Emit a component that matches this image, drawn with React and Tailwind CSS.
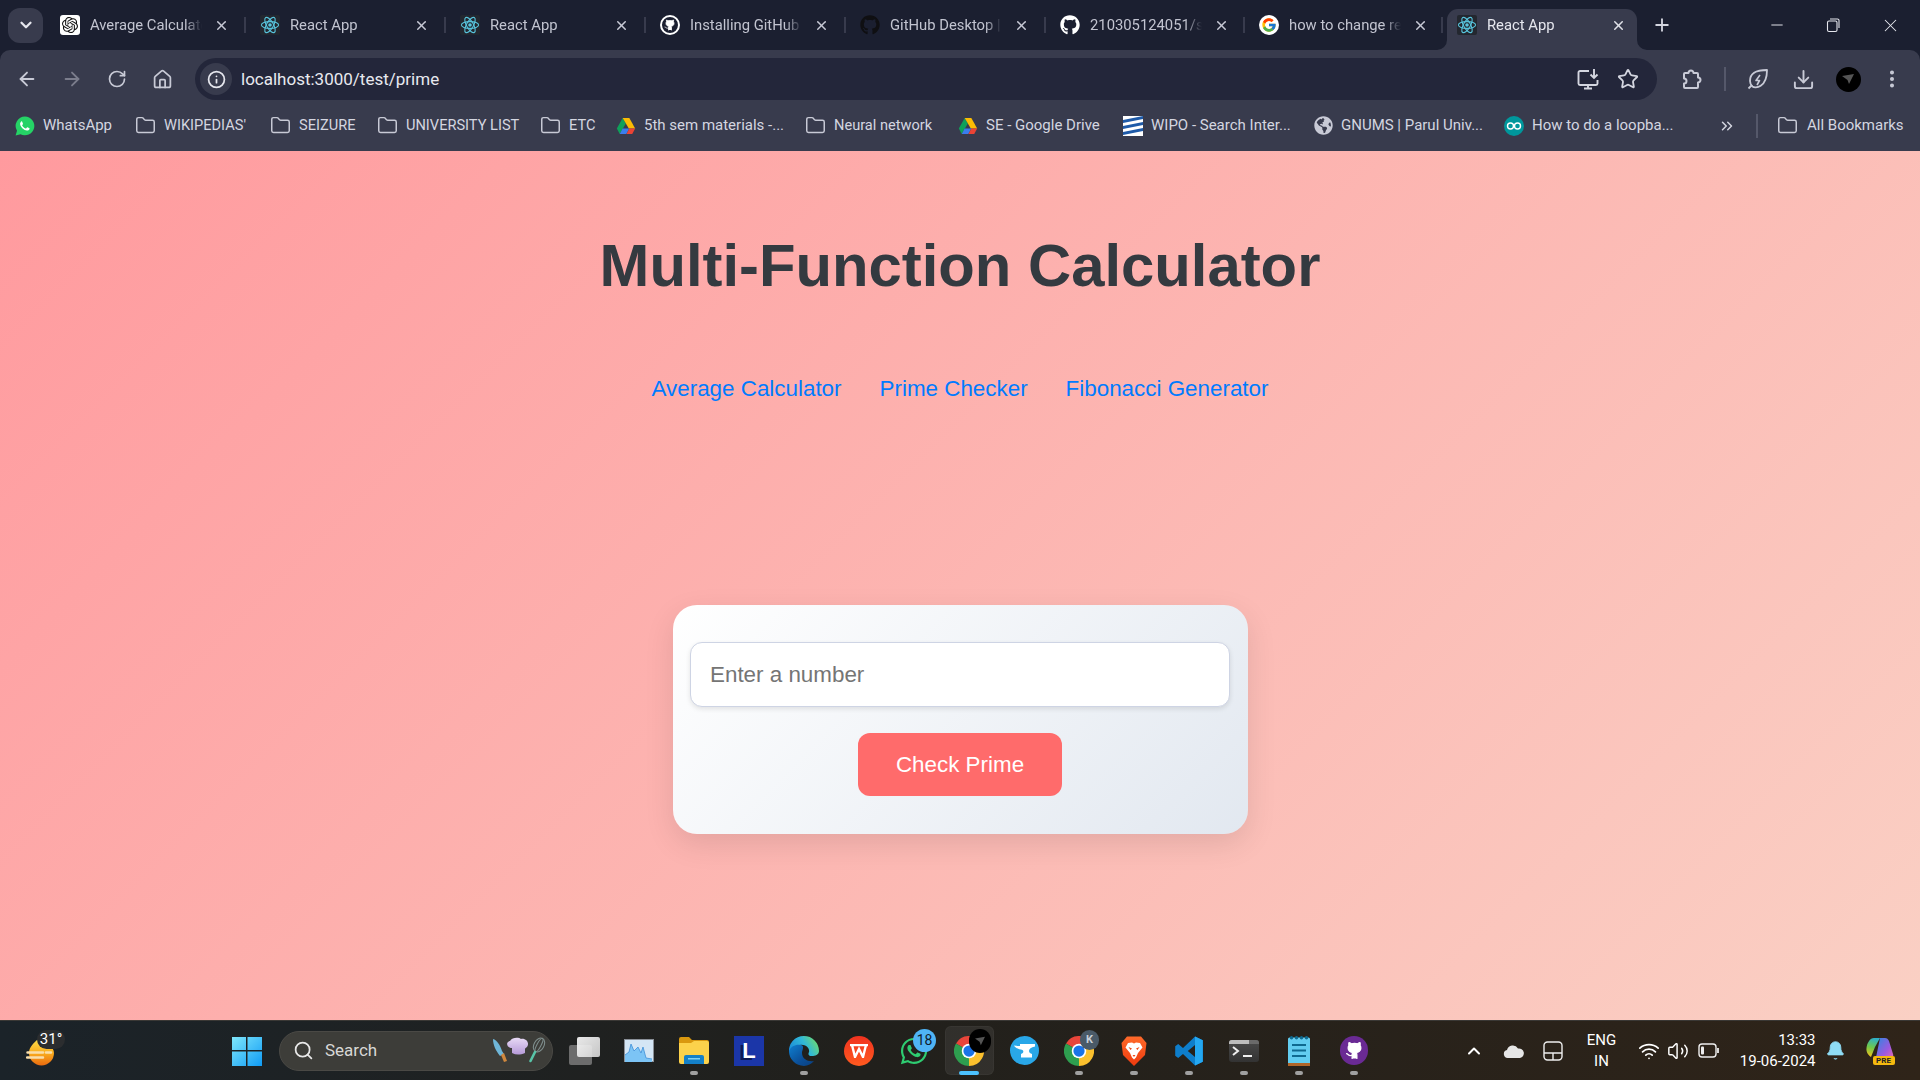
import React from "react";
import { ArrowLeft, ArrowRight, RotateCw, House, Info, Star, Download, EllipsisVertical, ChevronsRight, Folder, Minus, X, Plus, ChevronDown, Search, Wifi, Volume2, ChevronUp, Bell } from "lucide-react";
import { FaGithub, FaGlobeAmericas, FaWhatsapp } from "react-icons/fa";
import { FcGoogle } from "react-icons/fc";
import { SiOpenai } from "react-icons/si";

const ui = { fontFamily: "Roboto, 'Noto Sans', sans-serif" };

function GhCat({ size = 20 }) {
  return (
    <svg width={size} height={size} viewBox="0 0 24 24" fill="#fff" stroke="#fff" strokeWidth="1.6" strokeLinecap="round" strokeLinejoin="round">
      <path d="M15 22v-4a4.8 4.8 0 0 0-1-3.5c3 0 6-2 6-5.5.08-1.25-.27-2.48-1-3.5.28-1.15.28-2.35 0-3.5 0 0-1 0-3 1.5-2.64-.5-5.36-.5-8 0C6 2 5 2 5 2c-.3 1.15-.3 2.35 0 3.5A5.403 5.403 0 0 0 4 9c0 3.5 3 5.5 6 5.5-.39.49-.68 1.05-.85 1.65-.17.6-.22 1.23-.15 1.85v4" />
      <path d="M9 18c-4.51 2-5-2-7-2" fill="none" />
    </svg>
  );
}

function ReactLogo() {
  return (
    <svg width="20" height="20" viewBox="0 0 20 20" className="shrink-0">
      <rect width="20" height="20" rx="2" fill="#23272f" />
      <g fill="none" stroke="#58c4dc" strokeWidth="1.1">
        <ellipse cx="10" cy="10" rx="8.6" ry="3.4" />
        <ellipse cx="10" cy="10" rx="8.6" ry="3.4" transform="rotate(60 10 10)" />
        <ellipse cx="10" cy="10" rx="8.6" ry="3.4" transform="rotate(120 10 10)" />
      </g>
      <circle cx="10" cy="10" r="1.8" fill="#58c4dc" />
    </svg>
  );
}

function ChromeLogo({ size = 30 }) {
  return (
    <svg width={size} height={size} viewBox="0 0 24 24">
      <path d="M12 12L1.6 6A12 12 0 0 1 22.400 6Z" fill="#e8453a" />
      <path d="M12 12L22.400 6A12 12 0 0 1 12 24Z" fill="#fbc02d" />
      <path d="M12 12L12 24A12 12 0 0 1 1.600 6Z" fill="#2e9e4f" />
      <circle cx="12" cy="12" r="5.800" fill="#fff" />
      <circle cx="12" cy="12" r="4.500" fill="#1a73e8" />
    </svg>
  );
}

function DriveLogo() {
  return (
    <svg width="20" height="20" viewBox="0 0 24 24">
      <path d="M8 2.5L1 15l3.5 6.5L11.8 9Z" fill="#0fa05a" />
      <path d="M8 2.5h8L23 15h-7.6Z" fill="#fbbc04" />
      <path d="M8 15h8l-3.6 6.5H4.5Z" fill="#3b7ded" />
      <path d="M16 15h7l-3.5 6.5h-7Z" fill="#ea4335" />
    </svg>
  );
}

function WipoLogo() {
  return (
    <svg width="20" height="20" viewBox="0 0 20 20">
      <rect width="20" height="20" fill="#fff" />
      <path d="M0 4L20 0v3L0 7ZM0 10L20 6v3L0 13ZM0 16L20 12v3L0 19Z" fill="#1e5aa8" />
    </svg>
  );
}

function ArduinoLogo() {
  return (
    <svg width="20" height="20" viewBox="0 0 20 20">
      <circle cx="10" cy="10" r="10" fill="#00979c" />
      <circle cx="6.5" cy="10" r="3" fill="none" stroke="#fff" strokeWidth="1.4" />
      <circle cx="13.5" cy="10" r="3" fill="none" stroke="#fff" strokeWidth="1.4" />
    </svg>
  );
}

function WhatsBook() {
  return (
    <div className="relative w-5 h-5 flex items-center justify-center">
      <div className="absolute w-[15px] h-[15px] rounded-full bg-white" />
      <svg width="20" height="20" viewBox="0 0 20 20" className="relative">
        <path d="M10 .5a9.4 9.4 0 0 0-8 14.2L.6 19.5l4.9-1.3A9.4 9.4 0 1 0 10 .5Z" fill="#25d366" />
        <path d="M7 5.2c-.3 0-.7.1-1 .5-.4.4-1.1 1.2-.9 2.6.3 1.7 1.3 3 2.5 4.2 1.4 1.2 2.8 1.9 4.2 2.1 1.2.1 2.1-.5 2.5-1.2.2-.5.3-1 .2-1.2l-2-1c-.2-.1-.4 0-.6.2l-.8 1c-.1.2-.3.2-.5.1-1.5-.6-2.6-1.6-3.4-3-.1-.2 0-.4.1-.5l.6-.8c.1-.2.1-.4.1-.5l-.9-2.1c-.1-.2-.2-.4-.5-.4Z" fill="#fff" />
      </svg>
    </div>
  );
}

const tabs = [
  { w: 200, t: "Average Calculator - ChatGPT", i: <div className="w-5 h-5 rounded-[3px] bg-white flex items-center justify-center"><SiOpenai size={16} color="#111" /></div> },
  { w: 200, t: "React App", i: <ReactLogo /> },
  { w: 200, t: "React App", i: <ReactLogo /> },
  { w: 200, t: "Installing GitHub Desktop", i: <div className="w-5 h-5 rounded-full border-2 border-white flex items-center justify-center bg-[#1b1f30]"><GhCat size={12} /></div> },
  { w: 200, t: "GitHub Desktop | Simple", i: <FaGithub size={20} color="#0f0f12" /> },
  { w: 199, t: "210305124051/student-app", i: <FaGithub size={20} color="#fff" /> },
  { w: 198, t: "how to change remote", i: <div className="w-5 h-5 rounded-full bg-white flex items-center justify-center"><FcGoogle size={16} /></div> },
  { w: 199, t: "React App", i: <ReactLogo />, active: true },
];

function Tab({ t, i, active, w }) {
  return (
    <div style={{ width: w }} className="relative h-full flex items-center pl-[14px] shrink-0">
      {active && (
        <>
          <div className="absolute left-[4px] right-[5px] top-[9px] bottom-0 bg-[#383b4d] rounded-t-[11px]" />
          <svg width="10" height="10" viewBox="0 0 10 10" className="absolute left-[-6px] bottom-0"><path d="M10 0V10H0A10 10 0 0 0 10 0Z" fill="#383b4d" /></svg>
          <svg width="10" height="10" viewBox="0 0 10 10" className="absolute right-[-5px] bottom-0"><path d="M0 0V10H10A10 10 0 0 1 0 0Z" fill="#383b4d" /></svg>
        </>
      )}
      <div className="relative w-5 h-5 shrink-0 flex items-center justify-center">{i}</div>
      <div className={`relative ml-[10px] w-[112px] overflow-hidden whitespace-nowrap text-[14.8px] leading-5 [mask-image:linear-gradient(to_right,black_85%,transparent)] ${active ? "text-[#e6e7ee]" : "text-[#c2c4d0]"}`}>{t}</div>
      <X size={15} strokeWidth={2.4} className={`relative ml-[12px] shrink-0 ${active ? "text-[#e0e1e8]" : "text-[#c8cad6]"}`} />
      {!active && <div className="absolute right-[0px] top-[17px] h-[16px] w-[2px] bg-[#383b4d]" />}
    </div>
  );
}

function TabStrip() {
  return (
    <div className="h-[50px] bg-[#1b1f30] flex items-center shrink-0">
      <div className="w-[46px] h-full flex items-center pl-[8px] shrink-0">
        <div className="w-[35px] h-[35px] rounded-[12px] bg-[#383b4d] flex items-center justify-center">
          <ChevronDown size={18} strokeWidth={3} className="text-[#e6e7ee]" />
        </div>
      </div>
      {tabs.map((x, k) => <Tab key={k} {...x} />)}
      <Plus size={20} strokeWidth={2.2} className="text-[#d4d6e0] ml-[10px] shrink-0" />
      <div className="ml-auto flex items-center h-full">
        <div className="w-[56px] flex justify-center"><Minus size={18} strokeWidth={1.3} className="text-[#e6e7ee]" /></div>
        <div className="w-[56px] flex justify-center">
          <svg width="16" height="16" viewBox="0 0 16 16" fill="none" stroke="#e6e7ee" strokeWidth="1.1"><rect x="2.5" y="4" width="9.5" height="10.5" rx="1.5" /><path d="M5 2h7.5A1.5 1.5 0 0 1 14 3.5V11" /></svg>
        </div>
        <div className="w-[58px] flex justify-center mr-[1px]"><X size={21} strokeWidth={1.2} className="text-[#e6e7ee]" /></div>
      </div>
    </div>
  );
}

function Cell({ w = 45, children, className = "" }) {
  return <div style={{ width: w }} className={`flex items-center justify-center shrink-0 ${className}`}>{children}</div>;
}

function InstallIcon() {
  return (
    <svg width="24" height="24" viewBox="0 0 24 24" fill="none" stroke="#d4d6e0" strokeWidth="1.9">
      <path d="M13 4H4a1.5 1.5 0 0 0-1.5 1.5v11A1.5 1.5 0 0 0 4 18h16a1.5 1.5 0 0 0 1.5-1.5V13" />
      <path d="M8 21.5h8M12 18v3.5" />
      <path d="M18 2v8.5M14.5 7.5l3.5 3.5 3.5-3.5" />
    </svg>
  );
}

function LeafIcon() {
  return (
    <svg width="24" height="24" viewBox="0 0 24 24" fill="none" stroke="#c8cad6" strokeWidth="1.8" strokeLinejoin="round">
      <path d="M21 3C14 3 4 4 4 14c0 2 .8 4 2.5 5.5C9 21.5 21 21 21 3Z" />
      <path d="M2.5 21.5L6 18" />
      <path d="M14 8l-4 5.5h3.5L11 18" strokeWidth="1.6" />
    </svg>
  );
}

function PuzzleIcon() {
  return (
    <svg width="24" height="24" viewBox="0 0 24 24" fill="none" stroke="#c8cad6" strokeWidth="2" strokeLinejoin="round">
      <path d="M7 6h3.500a2.500 2.500 0 0 1 5 0H19a1 1 0 0 1 1 1v3.500a2.500 2.500 0 0 1 0 5V20a1 1 0 0 1-1 1H7a1 1 0 0 1-1-1v-3.500a2.500 2.500 0 0 0 0-5V7a1 1 0 0 1 1-1Z" />
    </svg>
  );
}

function Toolbar() {
  const c = "text-[#c8cad6]";
  return (
    <div className="h-[50px] bg-[#383b4d] rounded-t-[10px] flex items-center pl-[4.5px] pt-[8px] shrink-0">
      <Cell><ArrowLeft size={22} strokeWidth={2} className={c} /></Cell>
      <Cell><ArrowRight size={22} strokeWidth={2} className="text-[#7b7d8c]" /></Cell>
      <Cell><RotateCw size={20} strokeWidth={2} className={c} /></Cell>
      <Cell><House size={21} strokeWidth={2} className={c} /></Cell>
      <div className="ml-[10.5px] w-[1462px] h-[42px] rounded-full bg-[#23263a] flex items-center pl-[5px] pr-[8px] shrink-0">
        <div className="w-[32px] h-[32px] rounded-full bg-[#383b4d] flex items-center justify-center shrink-0">
          <Info size={19} strokeWidth={2.2} className="text-[#e6e7ee]" />
        </div>
        <span className="ml-[9px] pt-[2px] text-[17px] text-[#e8e9ef] whitespace-nowrap">localhost:3000/test/prime</span>
        <div className="ml-auto flex items-center">
          <Cell w={38}><InstallIcon /></Cell>
          <Cell w={42}><Star size={22} strokeWidth={2} className="text-[#d4d6e0]" /></Cell>
        </div>
      </div>
      <Cell w={44} className="ml-[11px]"><PuzzleIcon /></Cell>
      <div className="ml-[12px] w-[2px] h-[24px] bg-[#55586a]" />
      <Cell w={44} className="ml-[10px]"><LeafIcon /></Cell>
      <Cell w={46}><Download size={23} strokeWidth={2} className={c} /></Cell>
      <Cell w={44}>
        <div className="w-[25px] h-[25px] rounded-full bg-black flex items-center justify-center">
          <svg width="12" height="12" viewBox="0 0 12 12"><path d="M0 3l12-2-5 10-1.5-4Z" fill="#555" /></svg>
        </div>
      </Cell>
      <Cell w={44}><EllipsisVertical size={22} strokeWidth={2.4} className={c} /></Cell>
    </div>
  );
}

const folderIcon = <Folder size={21} strokeWidth={1.7} className="text-[#c8cad6]" />;
const bookmarks = [
  { w: 120, i: <WhatsBook />, t: "WhatsApp" },
  { w: 135, i: folderIcon, t: "WIKIPEDIAS'", f: true },
  { w: 107, i: folderIcon, t: "SEIZURE", f: true },
  { w: 163, i: folderIcon, t: "UNIVERSITY LIST", f: true },
  { w: 76, i: folderIcon, t: "ETC", f: true },
  { w: 189, i: <DriveLogo />, t: "5th sem materials -..." },
  { w: 153, i: folderIcon, t: "Neural network", f: true },
  { w: 165, i: <DriveLogo />, t: "SE - Google Drive" },
  { w: 190, i: <WipoLogo />, t: "WIPO - Search Inter..." },
  { w: 191, i: <FaGlobeAmericas size={19} color="#c8cad6" />, t: "GNUMS | Parul Univ..." },
  { w: 200, i: <ArduinoLogo />, t: "How to do a loopba..." },
];

function BookmarkBar() {
  return (
    <div className="h-[51px] bg-[#383b4d] flex items-center pl-[14px] shrink-0 text-[15px] text-[#d4d6e0]">
      {bookmarks.map((b, k) => (
        <div key={k} style={{ width: b.w }} className="flex items-center shrink-0">
          <div className="w-[22px] flex justify-center shrink-0">{b.i}</div>
          <span className={`${b.f ? "ml-[8px] text-[14.6px]" : "ml-[7px]"} whitespace-nowrap`}>{b.t}</span>
        </div>
      ))}
      <ChevronsRight size={18} strokeWidth={2} className="text-[#d4d6e0] ml-[15px] shrink-0" />
      <div className="ml-[20px] w-[2px] h-[24px] bg-[#55586a] shrink-0" />
      <div className="ml-[19px] flex items-center shrink-0">
        {folderIcon}
        <span className="ml-[9px] whitespace-nowrap">All Bookmarks</span>
      </div>
    </div>
  );
}

function Page() {
  return (
    <main className="flex-1 flex flex-col items-center bg-[linear-gradient(135deg,#ff9a9e,#fad0c4)]" style={{ fontFamily: "'Liberation Sans', Arial, sans-serif" }}>
      <h1 className="mt-[79px] text-[59.8px] leading-[72px] font-bold text-[#343a40]">Multi-Function Calculator</h1>
      <nav className="mt-[73px] flex gap-[38px] text-[22.4px] leading-[28px] text-[#007bff]">
        <a>Average Calculator</a>
        <a>Prime Checker</a>
        <a>Fibonacci Generator</a>
      </nav>
      <div className="mt-[202px] w-[575px] h-[229px] rounded-[24px] bg-[linear-gradient(135deg,#ffffff,#e2e8f0)] shadow-[0_10px_30px_rgba(0,0,0,0.1)] flex flex-col items-center pt-[37px]">
        <input readOnly placeholder="Enter a number" className="w-[540px] h-[65px] rounded-[12px] border border-[#ced4e4] bg-white px-[19px] text-[22.4px] text-[#333] placeholder:text-[#757575] shadow-[0_2px_5px_rgba(0,0,0,0.1)] outline-none" />
        <button className="mt-[26px] w-[204px] h-[63px] rounded-[12px] bg-[#ff6b6b] text-white text-[22.4px]">Check Prime</button>
      </div>
    </main>
  );
}

function Weather() {
  return (
    <div className="relative w-[60px] h-[50px]">
      <svg width="29" height="27" viewBox="0 0 29 27" className="absolute left-[6px] top-[13px]">
        <defs>
          <linearGradient id="sun" x1="0" y1="0" x2="0" y2="1"><stop offset="0" stopColor="#fde04a" /><stop offset="0.55" stopColor="#f9a91c" /><stop offset="1" stopColor="#ea6a10" /></linearGradient>
        </defs>
        <path d="M12 0C8 4 3 8 3 14a12.500 12.500 0 0 0 25 0C28 8 20 2 12 0Z" fill="url(#sun)" />
        <path d="M1.500 13.500H17M20 13.500h5M1 18.500H17" stroke="#f9deaa" strokeWidth="2.500" strokeLinecap="round" />
      </svg>
      <div className="absolute left-[17px] top-[4px] w-[28px] h-[19px] rounded-full bg-[#2b2d2f] text-white text-[15px] leading-[19px] text-center">31°</div>
    </div>
  );
}

function ChefIcons() {
  return (
    <svg width="54" height="27" viewBox="0 0 54 27" className="shrink-0">
      <defs>
        <linearGradient id="hat" x1="0" y1="0" x2="0" y2="1"><stop offset="0" stopColor="#e8daf5" /><stop offset="1" stopColor="#b69ad8" /></linearGradient>
      </defs>
      <path d="M1 2C5 3 8 8 10 14L12 17 8 19C4 14 1 8 1 2Z" fill="#6fb6d8" />
      <path d="M9 18L12 16 15 24 12 25Z" fill="#d0883e" />
      <path d="M20 11C15 11 13 5 18 4 20 0 27 0 29 2 34 1 38 6 35 10 34 11 33 11 33 12V16C28 18 24 18 20 16Z" fill="url(#hat)" />
      <g fill="none" stroke="#7e8d8c" strokeWidth="1.100">
        <ellipse cx="47" cy="8" rx="5" ry="7.500" transform="rotate(28 47 8)" />
        <ellipse cx="47" cy="8" rx="2" ry="7.500" transform="rotate(28 47 8)" />
      </g>
      <path d="M43 15L38.500 24" stroke="#58c4a8" strokeWidth="2.600" strokeLinecap="round" />
    </svg>
  );
}

function IC({ children, dot, active }) {
  return (
    <div className="relative w-[55px] h-[60px] flex items-center justify-center shrink-0">
      {active && <div className="absolute left-[3px] top-[5px] w-[49px] h-[49px] rounded-[6px] bg-[#ffffff12] border border-[#ffffff08]" />}
      <div className="relative flex">{children}</div>
      {dot && <div className="absolute left-[23.500px] top-[50px] w-[8px] h-[4px] rounded-full bg-[#a0a0a0]" />}
      {active && <div className="absolute left-[17.500px] top-[50px] w-[20px] h-[4px] rounded-full bg-[#4cc2ff]" />}
    </div>
  );
}

function Taskbar() {
  return (
    <div className="h-[60px] shrink-0 bg-[linear-gradient(90deg,#1b2329,#21201c_45%,#2f2419)] border-t border-[#3a3835] flex items-center text-white" style={{ fontFamily: "Roboto, 'Noto Sans', sans-serif" }}>
      <div className="w-[219.5px] shrink-0 pl-[20px]"><Weather /></div>
      <IC>
        <svg width="30" height="30" viewBox="0 0 30 30">
          <defs>
            <linearGradient id="win" x1="0" y1="0" x2="1" y2="1"><stop offset="0" stopColor="#7fe7fb" /><stop offset="1" stopColor="#0f9bf5" /></linearGradient>
          </defs>
          <path d="M0 1h14v13H0ZM15.500 1H30v13H15.500ZM0 15.500h14V30H0ZM15.500 15.500H30V30H15.500Z" fill="url(#win)" />
        </svg>
      </IC>
      <div className="ml-[4.5px] w-[274px] h-[40px] rounded-full bg-[#3d3d39] border border-[#4a4945] flex items-center pl-[13px] shrink-0">
        <Search size={21} strokeWidth={2} className="text-[#e8e8e8]" />
        <span className="ml-[11px] text-[17px] text-[#d8d8d6]">Search</span>
        <div className="ml-auto mr-[6px] flex"><ChefIcons /></div>
      </div>
      <div className="ml-[3.5px]" />
      <IC>
        <div className="relative w-[31px] h-[28px]">
          <div className="absolute left-0 bottom-0 w-[23px] h-[20px] rounded-[2px] bg-[#6c6c6c]" />
          <div className="absolute right-0 top-0 w-[23px] h-[20px] rounded-[2px] bg-[linear-gradient(135deg,#ffffff,#d8d8d8)] opacity-90" />
        </div>
      </IC>
      <IC>
        <svg width="30" height="23" viewBox="0 0 30 23">
          <rect x=".5" y=".5" width="29" height="22" fill="#d4e6f5" stroke="#8a9098" />
          <path d="M1 16L5 13 7 5l3 7 4-4 3 6 2-6 3 11 6 1v5H1Z" fill="#7cc4f5" />
          <path d="M1 16L5 13 7 5l3 7 4-4 3 6 2-6 3 11 6 1" fill="none" stroke="#3f8fd8" strokeWidth=".8" />
        </svg>
      </IC>
      <IC dot>
        <svg width="30" height="27" viewBox="0 0 30 27">
          <path d="M0 2a2 2 0 0 1 2-2h8l3 3h15a2 2 0 0 1 2 2v4H0Z" fill="#d9980f" />
          <path d="M0 6h12l3-2h13a2 2 0 0 1 2 2v19a2 2 0 0 1-2 2H2a2 2 0 0 1-2-2Z" fill="#fcd24b" />
          <path d="M5 20a2 2 0 0 1 2-2h16a2 2 0 0 1 2 2v7H5Z" fill="#1480c8" />
          <rect x="9" y="21" width="12" height="1.500" fill="#7fd0f5" />
        </svg>
      </IC>
      <IC>
        <div className="w-[30px] h-[30px] bg-[#1b36a8] flex items-center justify-center text-white text-[22px] font-bold [text-shadow:-3px_2px_0_#0c1a55]" style={{ fontFamily: "'Liberation Sans', sans-serif" }}>L</div>
      </IC>
      <IC dot>
        <svg width="30" height="30" viewBox="0 0 30 30">
          <defs>
            <linearGradient id="edge" x1="0" y1="0.700" x2="1" y2="0.300"><stop offset="0" stopColor="#1a8ad8" /><stop offset="0.550" stopColor="#31b8d8" /><stop offset="1" stopColor="#6fdc6c" /></linearGradient>
            <linearGradient id="edge2" x1="0" y1="0" x2="1" y2="1"><stop offset="0" stopColor="#0f7fd0" /><stop offset="0.600" stopColor="#0b4f98" /><stop offset="1" stopColor="#0a3f80" /></linearGradient>
          </defs>
          <path d="M15 0A15 15 0 0 1 30 15C30 19 26 20 23 20 19 20 19 18 20 16 21 12 16 8 11 9 6 10 2 14 0 17A15 15 0 0 1 15 0Z" fill="url(#edge)" />
          <path d="M0 15C2 10 7 8 12 9 16 10 13 14 13 17 13 23 19 26 25 25A15 15 0 0 1 15 30 15 15 0 0 1 0 15Z" fill="url(#edge2)" />
        </svg>
      </IC>
      <IC>
        <div className="w-[30px] h-[30px] rounded-full bg-[linear-gradient(180deg,#f0321f,#ff5a1f)] flex items-center justify-center">
          <svg width="20" height="14" viewBox="0 0 20 14" fill="none" stroke="#fff" strokeWidth="2.400"><path d="M1 1h18M3 1l3 12 4-8 4 8 3-12" /></svg>
        </div>
      </IC>
      <IC>
        <FaWhatsapp size={30} color="#2ecc71" />
        <div className="absolute right-[-7px] top-[-7px] w-[23px] h-[23px] rounded-full bg-[#4fb4f5] text-[#10202c] text-[14px] leading-[23px] text-center">18</div>
      </IC>
      <IC active>
        <ChromeLogo size={30} />
        <div className="absolute right-[-7px] top-[-7px] w-[22px] h-[24px] rounded-full bg-black flex items-center justify-center">
          <svg width="10" height="10" viewBox="0 0 12 12"><path d="M0 3l12-2-5 10-1.500-4Z" fill="#555" /></svg>
        </div>
      </IC>
      <IC>
        <div className="w-[29px] h-[29px] rounded-full bg-[#29a7e8] flex items-center justify-center">
          <svg width="21" height="14" viewBox="0 0 21 14" fill="#fff"><path d="M0 1.500C3 2 5 2 6 2V0h15v2.500C17 3 15 5 15 7c0 1.500 1.500 2.500 3 3v3.500H7V10C9.500 9 10 7 8.500 6 6 5 2 5 0 1.500Z" /></svg>
        </div>
      </IC>
      <IC dot>
        <ChromeLogo size={30} />
        <div className="absolute right-[-5px] top-[-6px] w-[19px] h-[20px] rounded-full bg-[#4a5a68] text-[#c8d0d8] text-[11px] font-bold leading-[20px] text-center">K</div>
      </IC>
      <IC dot>
        <svg width="26" height="30" viewBox="0 0 26 30">
          <defs>
            <linearGradient id="brave" x1="0" y1="0" x2="0" y2="1"><stop offset="0" stopColor="#ff6a2a" /><stop offset="1" stopColor="#ee3a0e" /></linearGradient>
          </defs>
          <path d="M6 0.500H20L25.500 7 24 19 13 30 2 19 .5 7Z" fill="url(#brave)" />
          <path d="M7 7L11 6.500 13 7.500 15 6.500 19 7 21.500 11.500 17 17 15 21.500 13 23.500 11 21.500 9 17 4.500 11.500Z" fill="#fff" />
          <path d="M7.500 11L11 12.500 9.500 14ZM18.500 11L15 12.500 16.500 14ZM11.500 19H14.500L13 21Z" fill="#ee4a18" />
        </svg>
      </IC>
      <IC dot>
        <svg width="30" height="30" viewBox="0 0 100 100">
          <path fillRule="evenodd" d="M70 2L96 14V86L70 98 30 60 14 73 4 66V34L14 27 30 40ZM70 30L46 50 70 70Z" fill="#0e7ecb" />
          <path d="M70 2L96 14V86L70 98V70 30Z" fill="#24a8f2" />
        </svg>
      </IC>
      <IC dot>
        <div className="w-[30px] h-[22px] rounded-[3px] bg-[linear-gradient(180deg,#4a4a4a,#333)] relative overflow-hidden">
          <div className="h-[4px] bg-[#6a6a6a]"><div className="w-[20px] h-[4px] bg-[#bdbdbd]" /></div>
          <svg width="30" height="18" viewBox="0 0 30 18" fill="none" stroke="#eee" strokeWidth="2"><path d="M4 3l5 4-5 4M14 12h9" /></svg>
        </div>
      </IC>
      <IC dot>
        <svg width="22" height="30" viewBox="0 0 22 30">
          <rect x="0" y="1.500" width="22" height="28.500" rx="1.500" fill="#62cdf0" />
          <rect x="0" y="27" width="22" height="3" fill="#b0662a" />
          <circle cx="3.500" cy="1.800" r="1.700" fill="#0f6a90" />
          <circle cx="8.500" cy="1.800" r="1.700" fill="#0f6a90" />
          <circle cx="13.500" cy="1.800" r="1.700" fill="#0f6a90" />
          <circle cx="18.500" cy="1.800" r="1.700" fill="#0f6a90" />
          <path d="M4 9h14M4 14.500h14M4 20h14" stroke="#0f6a90" strokeWidth="2.200" />
        </svg>
      </IC>
      <IC dot>
        <div className="w-[28px] h-[29px] rounded-full bg-[#6a2a94] flex items-center justify-center"><GhCat size={19} /></div>
      </IC>
      <Cell w={40} className="ml-[72px]"><ChevronUp size={20} strokeWidth={2.400} className="text-white" /></Cell>
      <Cell w={40}>
        <svg width="22" height="14" viewBox="0 0 22 14"><path d="M5 14a4 4 0 0 1-1-7.900A6 6 0 0 1 15 4.500 4.800 4.800 0 0 1 17 14Z" fill="#e6e6e6" /></svg>
      </Cell>
      <Cell w={38}>
        <svg width="20" height="20" viewBox="0 0 20 20" fill="none" stroke="#eee" strokeWidth="1.400"><rect x="1" y="1" width="18" height="18" rx="3.500" /><path d="M1 12h18M10 12v7" /></svg>
      </Cell>
      <div className="w-[60px] text-center text-[15px] leading-[21px] shrink-0">ENG<br />IN</div>
      <Cell w={30} className="ml-[2px]"><Wifi size={22} strokeWidth={1.900} className="text-white" /></Cell>
      <Cell w={28}><Volume2 size={22} strokeWidth={1.600} className="text-white" /></Cell>
      <Cell w={34}>
        <svg width="21" height="15" viewBox="0 0 21 15" fill="none" stroke="#eee" strokeWidth="1.400"><rect x="1" y="1" width="17" height="13" rx="3" /><rect x="3" y="3.500" width="3" height="8" rx="1" fill="#eee" stroke="none" /><path d="M20 5v5" strokeWidth="1.800" /></svg>
      </Cell>
      <div className="w-[90px] text-right text-[15px] leading-[21px] shrink-0">13:33<br />19-06-2024</div>
      <Cell w={40}><Bell size={21} fill="#8fdcf5" strokeWidth={1} className="text-[#8fdcf5]" /></Cell>
      <Cell w={50}>
        <div className="relative w-[30px] h-[28px]">
          <svg width="28" height="24" viewBox="0 0 28 24" className="absolute left-0 top-0">
            <defs>
              <linearGradient id="copL" x1="0.500" y1="0" x2="0.300" y2="1"><stop offset="0" stopColor="#2fb0c8" /><stop offset="0.500" stopColor="#6fc84a" /><stop offset="1" stopColor="#f2c21a" /></linearGradient>
              <linearGradient id="copR" x1="0" y1="0" x2="1" y2="1"><stop offset="0" stopColor="#2f86e0" /><stop offset="0.600" stopColor="#9a5ae0" /><stop offset="1" stopColor="#e86ab0" /></linearGradient>
            </defs>
            <path d="M14 1H19C21 1 22 2 23 4L27 17C28 20 26 22 23 22H13C10 22 10 20 10.500 18Z" fill="url(#copR)" />
            <path d="M8 1H14L9 10 5 20C2 18 0 15 .5 11 1 6 4 1 8 1Z" fill="url(#copL)" />
          </svg>
          <div className="absolute left-[7px] bottom-0 w-[22px] h-[9px] rounded-[2px] bg-[#f5b90f] text-[#222] text-[8px] font-bold leading-[9px] text-center">PRE</div>
        </div>
      </Cell>
    </div>
  );
}

export default function App() {
  return (
    <div className="w-[1920px] h-[1080px] overflow-hidden flex flex-col bg-[#1b1f30]" style={ui}>
      <TabStrip />
      <Toolbar />
      <BookmarkBar />
      <Page />
      <Taskbar />
    </div>
  );
}
